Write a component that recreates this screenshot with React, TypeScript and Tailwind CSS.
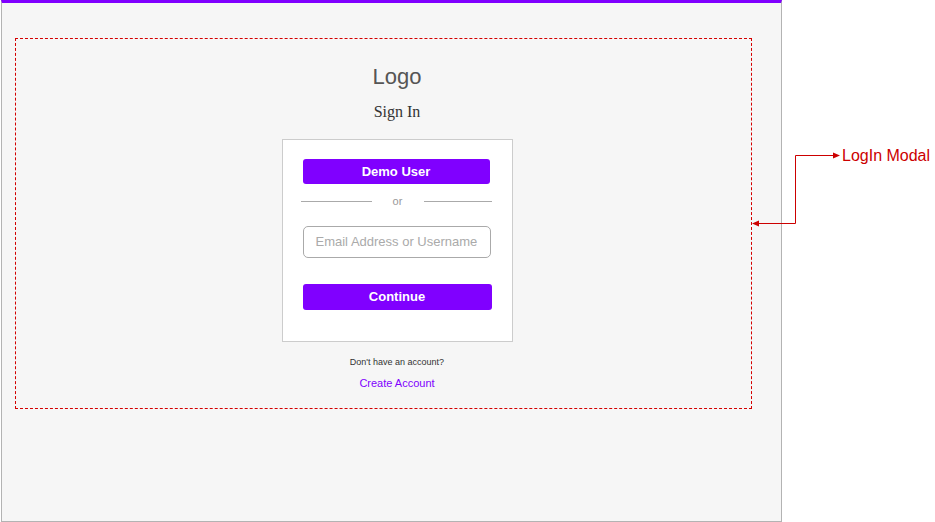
import React from "react";

export default function App() {
  return (
    <div
      className="relative flex h-[522px] w-[935px] bg-white overflow-hidden"
      style={{ fontFamily: '"Liberation Sans", Arial, sans-serif' }}
    >
      <div className="ml-px flex h-[522px] w-[781px] flex-col border-x border-b border-t-[3px] border-x-[#b3b3b3] border-b-[#b3b3b3] border-t-[#8000ff] bg-[#f6f6f6]">
        <div className="ml-[13px] mt-[35px] flex h-[371px] w-[737px] flex-col items-center border border-dashed border-[#d40000] pl-[27px] pt-[25px]">
          <div className="text-[22px] leading-[26px] text-[#555555]">Logo</div>
          <div
            className="mt-[12px] text-[16px] leading-[20px] text-[#333333]"
            style={{ fontFamily: '"Liberation Serif", "Times New Roman", serif' }}
          >
            Sign In
          </div>
          <div className="mt-[17px] flex w-[231px] flex-col items-start border border-[#cccccc] bg-white pb-[31px] pl-[20px] pt-[19px]">
            <button className="flex h-[25px] w-[187px] items-center justify-center rounded-[3px] bg-[#8000ff] text-[13px] font-bold text-white">
              Demo User
            </button>
            <div className="-ml-[2px] mt-[9px] flex h-[16px] w-[191px] items-center">
              <div className="h-px w-[71px] bg-[#aaaaaa]" />
              <div className="w-[52px] text-center text-[11px] leading-[16px] text-[#999999]">or</div>
              <div className="h-px w-[68px] bg-[#aaaaaa]" />
            </div>
            <div className="mt-[17px] flex h-[32px] w-[188px] items-center whitespace-nowrap rounded-[5px] border border-[#aaaaaa] bg-white pl-[12px] text-[13px] text-[#aaaaaa]">
              Email Address or Username
            </div>
            <button className="mt-[26px] flex h-[26px] w-[189px] items-center justify-center rounded-[3px] bg-[#8000ff] text-[13px] font-bold text-white">
              Continue
            </button>
          </div>
          <div className="mt-[14px] text-[9px] leading-[12px] text-[#333333]">Don't have an account?</div>
          <div className="mt-[8px] text-[11px] leading-[14px] text-[#8000ff]">Create Account</div>
        </div>
      </div>
      <div className="flex-1 pl-[60px] pt-[146px]">
        <div className="text-[16px] leading-[19px] text-[#cc0000]">LogIn Modal</div>
      </div>
      <svg
        className="pointer-events-none absolute left-0 top-0"
        width="935"
        height="522"
        viewBox="0 0 935 522"
      >
        <path
          d="M757 223.5 H795.5 V155.5 H834"
          fill="none"
          stroke="#cc0000"
          strokeWidth="1"
        />
        <path d="M840 155.5 L833 152.5 L833 158.5 Z" fill="#cc0000" />
        <path d="M752 223.5 L759 220.5 L759 226.5 Z" fill="#cc0000" />
      </svg>
    </div>
  );
}
